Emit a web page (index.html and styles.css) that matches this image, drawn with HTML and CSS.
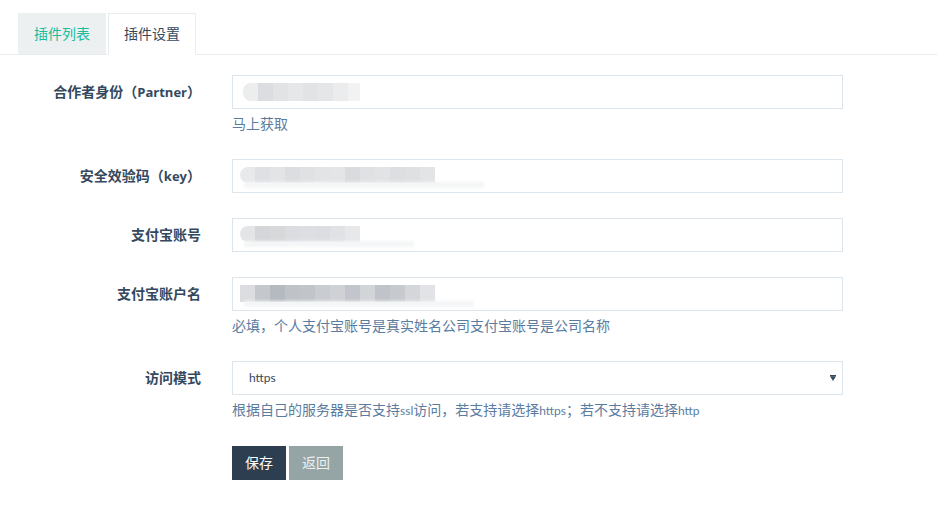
FILE: index.html
```html
<!DOCTYPE html>
<html lang="zh-CN">
<head>
<meta charset="utf-8">
<title>插件设置</title>
<link rel="stylesheet" href="styles.css">
</head>
<body>
<ul class="tabs">
  <li class="tab tab-inactive">插件列表</li>
  <li class="tab tab-active">插件设置</li>
</ul>
<form class="form">
  <div class="group">
    <label class="label">合作者身份（<span class="latin">Partner</span>）</label>
    <div class="control">
      <div class="field">
        <input class="input" type="text">
        <span class="mask mask-a"></span>
      </div>
      <div class="help">马上获取</div>
    </div>
  </div>
  <div class="group">
    <label class="label">安全效验码（<span class="latin">key</span>）</label>
    <div class="control">
      <div class="field">
        <input class="input" type="text">
        <span class="mask mask-b"></span>
        <span class="mask-shadow mask-b-shadow"></span>
      </div>
    </div>
  </div>
  <div class="group">
    <label class="label">支付宝账号</label>
    <div class="control">
      <div class="field">
        <input class="input" type="text">
        <span class="mask mask-c"></span>
        <span class="mask-shadow mask-c-shadow"></span>
      </div>
    </div>
  </div>
  <div class="group">
    <label class="label">支付宝账户名</label>
    <div class="control">
      <div class="field">
        <input class="input" type="text">
        <span class="mask mask-d"></span>
        <span class="mask-shadow mask-d-shadow"></span>
      </div>
      <div class="help">必填，个人支付宝账号是真实姓名公司支付宝账号是公司名称</div>
    </div>
  </div>
  <div class="group">
    <label class="label">访问模式</label>
    <div class="control">
      <div class="field">
        <select class="select">
          <option>https</option>
          <option>http</option>
        </select>
        <svg class="caret" viewBox="0 0 6 6"><rect x="0" y="0" width="6" height="1.3" fill="#34495e"/><polygon points="0,1.3 6,1.3 3,6" fill="#34495e"/></svg>
      </div>
      <div class="help">根据自己的服务器是否支持<span class="small">ssl</span>访问，若支持请选择<span class="small">https</span>；若不支持请选择<span class="small">http</span></div>
    </div>
  </div>
  <div class="group">
    <div></div>
    <div class="actions">
      <button type="button" class="btn btn-save">保存</button>
      <button type="button" class="btn btn-back">返回</button>
    </div>
  </div>
</form>
</body>
</html>
```
FILE: styles.css
```css
* { box-sizing: border-box; }
html, body { margin: 0; padding: 0; background: #fff; }
body {
  font-family: "Lato", "Noto Sans CJK SC", sans-serif;
  font-size: 14px;
  line-height: 20px;
  color: #34495e;
}
.tabs {
  list-style: none;
  margin: 13px 0 0;
  padding: 0 0 0 18px;
  display: flex;
  gap: 2px;
  border-bottom: 1px solid #e8ecee;
}
.tab {
  padding: 10px 15px;
  line-height: 20px;
  font-size: 14px;
  margin-bottom: -1px;
}
.tab-inactive {
  background: #ecf0f1;
  color: #1abc9c;
  border: 1px solid #ecf0f1;
  border-bottom-color: #e8ecee;
}
.tab-active {
  background: #fff;
  color: #34495e;
  border: 1px solid #e8ecee;
  border-bottom-color: #fff;
}
.form { margin: 20px 0 0; }
.group {
  display: grid;
  grid-template-columns: 201px 611px;
  column-gap: 31px;
  margin-bottom: 25px;
}
.label {
  text-align: right;
  font-weight: bold;
  padding-top: 7px;
  line-height: 20px;
  color: #34495e;
}
.latin { font-family: "Open Sans", "Lato", sans-serif; font-size: 13px; }
.field { position: relative; }
.input, .select {
  display: block;
  width: 100%;
  height: 34px;
  border: 1px solid #dce4ec;
  border-radius: 0;
  background: #fff;
  padding: 6px 12px;
  font: inherit;
  color: #34495e;
  outline: none;
}
.select {
  -webkit-appearance: none;
  appearance: none;
  padding-left: 16px;
  font-size: 12px;
}
.caret {
  position: absolute;
  right: 7px;
  top: 14px;
  width: 6px;
  height: 6px;
  pointer-events: none;
}
.mask {
  position: absolute;
  left: 8px;
  top: 8px;
  height: 18px;
  border-radius: 8px 0 0 8px;
  filter: blur(0.7px);
}
.mask-shadow {
  position: absolute;
  height: 6px;
  top: 24px;
  left: 12px;
  background: #f4f5f6;
  filter: blur(1.5px);
}
.mask-a {
  left: 11px;
  width: 117px;
  background: linear-gradient(90deg, #eceded 0 15px, #dcdde0 15px 30px, #e2e3e5 30px 45px, #e6e7e8 45px 60px, #e2e3e5 60px 75px, #e5e6e8 75px 90px, #ebeced 90px 105px, #f2f2f3 105px);
}
.mask-b {
  width: 195px;
  top: 8px;
  height: 16px;
  background: linear-gradient(90deg, #e8e9ea 0 15px, #dfe0e3 15px 30px, #e2e4e6 30px 45px, #dcdde0 45px 60px, #dfe1e3 60px 75px, #e2e4e6 75px 90px, #e4e5e7 90px 105px, #d9dbdf 105px 120px, #dfe1e3 120px 135px, #e1e3e5 135px 150px, #dcdee1 150px 165px, #dfe0e2 165px 180px, #e3e4e6 180px);
}
.mask-b-shadow { width: 240px; top: 23px; }
.mask-c {
  width: 120px;
  height: 16px;
  background: linear-gradient(90deg, #e4e5e6 0 15px, #d4d6d9 15px 30px, #d6d8da 30px 45px, #dadce0 45px 60px, #dcdee1 60px 75px, #dcdde1 75px 90px, #e0e2e5 90px 105px, #e7e8ea 105px);
}
.mask-c-shadow { width: 170px; top: 23px; }
.mask-d {
  width: 195px;
  height: 17px;
  border-radius: 0;
  background: linear-gradient(90deg, #dcdde0 0 15px, #c4c8cc 15px 30px, #b5bac0 30px 45px, #bfc3c8 45px 60px, #c1c5c9 60px 75px, #c9ccd0 75px 90px, #cfd1d5 90px 105px, #c2c6cc 105px 120px, #d2d4d8 120px 135px, #c0c4ca 135px 150px, #c6cace 150px 165px, #d4d6da 165px 180px, #e2e3e6 180px);
}
.mask-d-shadow { width: 230px; top: 24px; }
.help {
  margin-top: 5px;
  line-height: 20px;
  font-size: 14px;
  color: #5a7ca1;
  white-space: nowrap;
}
.small { font-size: 12px; }
.actions { display: flex; gap: 3px; }
.btn {
  height: 34px;
  padding: 6px 13px;
  border: none;
  border-radius: 0;
  font: inherit;
  font-size: 14px;
  line-height: 22px;
  cursor: pointer;
}
.btn-save { background: #2c3e50; color: #fff; }
.btn-back { background: #95a5a6; color: #ecf0f1; }
```
